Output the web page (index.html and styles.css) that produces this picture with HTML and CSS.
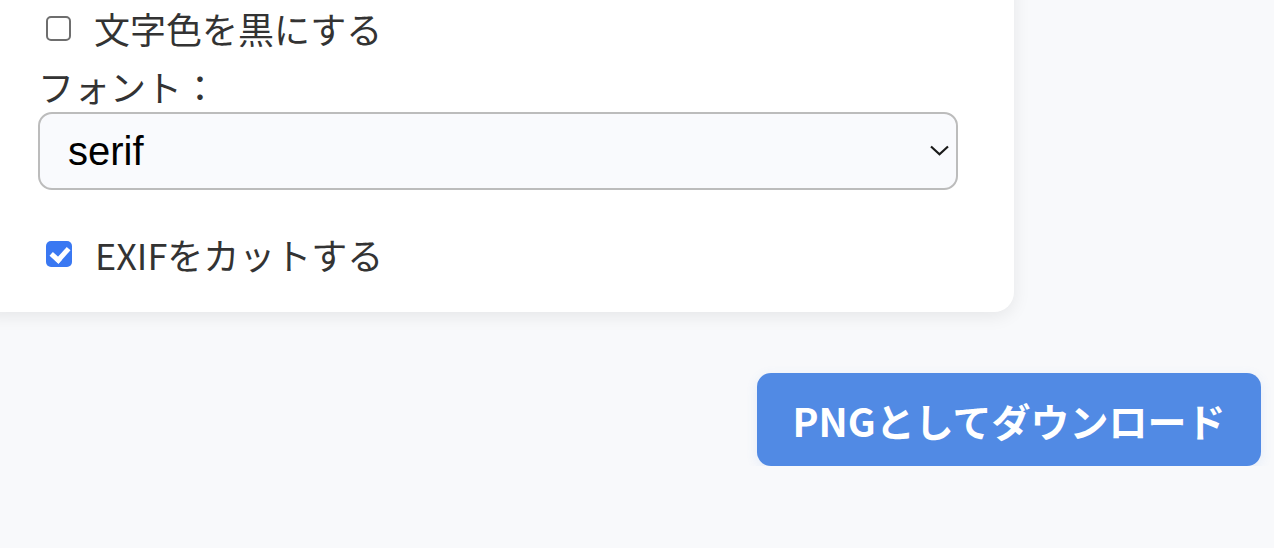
FILE: index.html
```html
<!DOCTYPE html>
<html lang="ja">
<head>
<meta charset="utf-8">
<title>設定</title>
<link rel="stylesheet" href="styles.css">
</head>
<body>
<div class="page">
  <section class="card">
    <label class="check-row">
      <input type="checkbox" class="check">
      <span>文字色を黒にする</span>
    </label>
    <div class="field-label">フォント：</div>
    <div class="select-wrap">
      <select class="select">
        <option>serif</option>
        <option>sans-serif</option>
        <option>monospace</option>
      </select>
      <svg class="chevron" width="19" height="11" viewBox="0 0 19 11" aria-hidden="true">
        <path d="M1 1.5 L9.5 9.2 L18 1.5" fill="none" stroke="#1a1a1a" stroke-width="2.2"/>
      </svg>
    </div>
    <label class="check-row exif">
      <input type="checkbox" class="check" checked>
      <span>EXIFをカットする</span>
    </label>
  </section>
  <div class="actions">
    <button class="download">PNGとしてダウンロード</button>
  </div>
</div>
</body>
</html>
```

FILE: styles.css
```css
html, body {
  margin: 0;
  padding: 0;
  background: #f8f9fb;
  overflow: hidden;
}

body {
  font-family: "Noto Sans CJK JP", "Noto Sans", sans-serif;
  color: #333333;
}

.page {
  display: flex;
  flex-direction: column;
}

.card {
  box-sizing: border-box;
  width: 1038px;
  margin: -30px 0 0 -24px;
  padding: 34px 56px 34px 62px;
  background: #ffffff;
  border-radius: 20px;
  box-shadow: 0 4px 18px rgba(0, 0, 0, 0.08);
  display: flex;
  flex-direction: column;
}

.check-row {
  display: flex;
  align-items: center;
  gap: 23px;
  height: 48px;
  padding-left: 8px;
  font-size: 36px;
  line-height: 48px;
}

.check {
  appearance: none;
  -webkit-appearance: none;
  margin: 0;
  width: 25px;
  height: 25px;
  box-sizing: border-box;
  border: 2px solid #6e6e6e;
  border-radius: 5px;
  background: #ffffff;
  position: relative;
  flex: none;
}

.check:checked {
  width: 26px;
  height: 26px;
  border: none;
  background: #3a78f2;
}

.check:checked::after {
  content: "";
  position: absolute;
  left: 8px;
  top: 3px;
  width: 7px;
  height: 13px;
  border-right: 5px solid #ffffff;
  border-bottom: 5px solid #ffffff;
  transform: rotate(42deg);
}

.field-label {
  height: 48px;
  margin-top: 10px;
  font-size: 36px;
  line-height: 48px;
}

.select-wrap {
  position: relative;
  margin-top: 2px;
}

.select {
  appearance: none;
  -webkit-appearance: none;
  box-sizing: border-box;
  width: 920px;
  height: 78px;
  margin: 0;
  padding: 0 28px;
  border: 2px solid #bcbcbc;
  border-radius: 14px;
  background: #f9fafd;
  font-family: "Liberation Sans", Arial, sans-serif;
  font-size: 40px;
  color: #000000;
}

.chevron {
  position: absolute;
  left: 892px;
  top: 33px;
  pointer-events: none;
}

.exif {
  margin-top: 40px;
}

.actions {
  display: flex;
  justify-content: flex-end;
  padding: 61px 13px 0 0;
}

.download {
  box-sizing: border-box;
  width: 504px;
  height: 93px;
  padding: 0;
  border: none;
  border-radius: 14px;
  background: #518ae4;
  color: #ffffff;
  font-family: "Noto Sans CJK JP", sans-serif;
  font-weight: 700;
  font-size: 39px;
  box-shadow: 0 3px 12px rgba(81, 138, 228, 0.12);
}
```
